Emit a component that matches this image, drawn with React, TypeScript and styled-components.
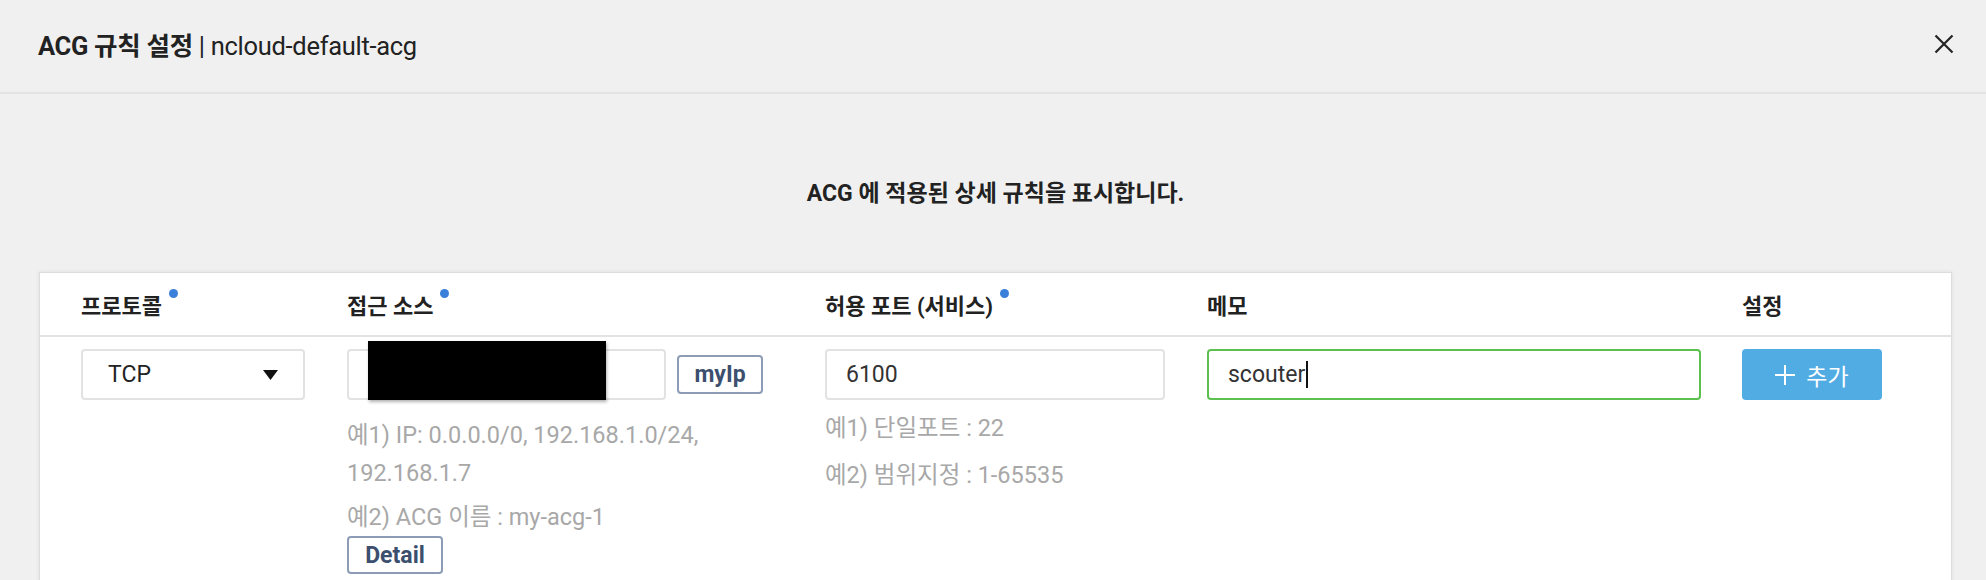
import styled, { createGlobalStyle } from 'styled-components';

const GlobalStyle = createGlobalStyle`
  html, body {
    margin: 0;
    padding: 0;
    background: #f0f0f0;
    font-family: Roboto, "Noto Sans CJK KR", sans-serif;
    color: #222;
  }
  body {
    height: 580px;
    overflow: hidden;
  }
`;

const Page = styled.div`
  display: flex;
  flex-direction: column;
  height: 580px;
`;

const Header = styled.header`
  display: flex;
  align-items: center;
  justify-content: space-between;
  height: 94px;
  padding: 0 29px 5px 38px;
  border-bottom: 2px solid #e3e3e3;
  box-sizing: border-box;
  flex-shrink: 0;
`;

const Title = styled.h1`
  margin: 0;
  font-size: 25.5px;
  font-weight: 700;
  letter-spacing: -0.3px;
`;

const SubName = styled.span`
  font-weight: 400;
`;

const CloseButton = styled.button`
  display: flex;
  align-items: center;
  justify-content: center;
  width: 26px;
  height: 26px;
  padding: 0;
  border: 0;
  background: none;
`;

const Body = styled.main`
  display: flex;
  flex-direction: column;
  padding: 84px 34px 0 39px;
`;

const Lead = styled.p`
  margin: 0 0 62px;
  text-align: center;
  font-size: 23px;
  font-weight: 700;
  line-height: 32px;
`;

const Card = styled.section`
  background: #fff;
  border: 1px solid #dddddd;
  box-shadow: 0 0 4px rgba(0, 0, 0, 0.08);
  height: 400px;
`;

const Row = styled.div<{ $head?: boolean }>`
  display: grid;
  grid-template-columns: 266px 478px 382px 535px 1fr;
  padding: ${(p) => (p.$head ? '0 0 0 41px' : '12px 0 0 41px')};
  height: ${(p) => (p.$head ? '62px' : 'auto')};
  align-items: ${(p) => (p.$head ? 'center' : 'start')};
  border-bottom: ${(p) => (p.$head ? '2px solid #e3e3e3' : 'none')};
`;

const HeadCell = styled.div`
  font-size: 22px;
  font-weight: 700;
  color: #222;
  display: flex;
  align-items: flex-start;
  gap: 7px;
`;

const Dot = styled.span`
  width: 9px;
  height: 9px;
  border-radius: 50%;
  background: #3a7fd9;
  margin-top: 1px;
`;

const Cell = styled.div`
  display: flex;
  flex-direction: column;
  align-items: flex-start;
`;

const Select = styled.div`
  display: flex;
  align-items: center;
  justify-content: space-between;
  width: 224px;
  height: 51px;
  padding: 0 25px 0 25px;
  box-sizing: border-box;
  border: 2px solid #e2e2e2;
  border-radius: 4px;
  font-size: 23px;
  color: #222;
`;

const Field = styled.div<{ $w: number; $focus?: boolean }>`
  position: relative;
  display: flex;
  align-items: center;
  width: ${(p) => p.$w}px;
  height: 51px;
  padding: 0 19px;
  box-sizing: border-box;
  border: 2px solid ${(p) => (p.$focus ? '#5cc04f' : '#e2e2e2')};
  border-radius: 4px;
  font-size: 23px;
  color: #333;
  background: #fff;
`;

const Caret = styled.span`
  display: inline-block;
  width: 1.5px;
  height: 27px;
  background: #111;
  margin-left: 1px;
`;

const SourceLine = styled.div`
  display: flex;
  align-items: center;
  gap: 11px;
`;

const Redaction = styled.div`
  position: absolute;
  left: 19px;
  top: -10px;
  width: 238px;
  height: 59px;
  background: #000;
  box-shadow: 1px 2px 3px rgba(0, 0, 0, 0.3);
`;

const OutlineButton = styled.button<{ $w: number; $h: number }>`
  width: ${(p) => p.$w}px;
  height: ${(p) => p.$h}px;
  border: 2px solid #8c9cb6;
  border-radius: 4px;
  background: #fff;
  color: #3c4f6e;
  font-family: Roboto, sans-serif;
  font-size: 23px;
  font-weight: 700;
  padding: 0;
`;

const Hint = styled.p<{ $mt: number }>`
  margin: ${(p) => p.$mt}px 0 0;
  font-size: 23.5px;
  line-height: 38px;
  color: #a8a8a8;
`;

const AddButton = styled.button`
  display: flex;
  align-items: center;
  justify-content: center;
  gap: 11px;
  width: 140px;
  height: 51px;
  border: 0;
  border-radius: 4px;
  background: #52ace4;
  color: #fff;
  font-family: Roboto, "Noto Sans CJK KR", sans-serif;
  font-size: 23px;
  padding: 0;
`;

const Required = ({ children }: { children: string }) => (
  <HeadCell>
    {children}
    <Dot />
  </HeadCell>
);

const App = () => {
  return (
    <Page>
      <GlobalStyle />
      <Header>
        <Title>
          ACG 규칙 설정 <SubName>| ncloud-default-acg</SubName>
        </Title>
        <CloseButton aria-label="close">
          <svg width="20" height="20" viewBox="0 0 20 20">
            <path d="M1.5 1.5 L18.5 18.5 M18.5 1.5 L1.5 18.5" stroke="#222" strokeWidth="2.2" />
          </svg>
        </CloseButton>
      </Header>

      <Body>
        <Lead>ACG 에 적용된 상세 규칙을 표시합니다.</Lead>
        <Card>
          <Row $head>
            <Required>프로토콜</Required>
            <Required>접근 소스</Required>
            <Required>허용 포트 (서비스)</Required>
            <HeadCell>메모</HeadCell>
            <HeadCell>설정</HeadCell>
          </Row>
          <Row>
            <Cell>
              <Select>
                TCP
                <svg width="15" height="10" viewBox="0 0 15 10">
                  <path d="M0 0 H15 L7.5 10 Z" fill="#111" />
                </svg>
              </Select>
            </Cell>
            <Cell>
              <SourceLine>
                <Field $w={319}>
                  <Redaction />
                </Field>
                <OutlineButton $w={86} $h={39}>myIp</OutlineButton>
              </SourceLine>
              <Hint $mt={16}>
                예1) IP: 0.0.0.0/0, 192.168.1.0/24,
                <br />
                192.168.1.7
              </Hint>
              <Hint $mt={6}>예2) ACG 이름 : my-acg-1</Hint>
              <OutlineButton $w={96} $h={38}>Detail</OutlineButton>
            </Cell>
            <Cell>
              <Field $w={340}>6100</Field>
              <Hint $mt={9}>예1) 단일포트 : 22</Hint>
              <Hint $mt={9}>예2) 범위지정 : 1-65535</Hint>
            </Cell>
            <Cell>
              <Field $w={494} $focus>
                scouter
                <Caret />
              </Field>
            </Cell>
            <Cell>
              <AddButton>
                <svg width="20" height="20" viewBox="0 0 20 20">
                  <path d="M10 0 V20 M0 10 H20" stroke="#fff" strokeWidth="2" />
                </svg>
                추가
              </AddButton>
            </Cell>
          </Row>
        </Card>
      </Body>
    </Page>
  );
};

export default App;
